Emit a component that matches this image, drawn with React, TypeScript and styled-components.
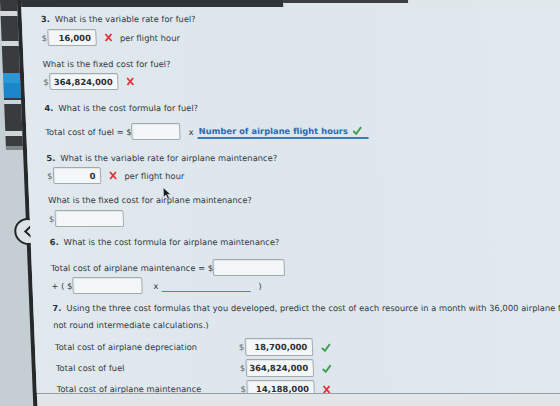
import React from 'react';
import styled, { createGlobalStyle } from 'styled-components';

const GlobalStyle = createGlobalStyle`
  html, body {
    margin: 0;
    padding: 0;
  }
  body {
    background: #c5ced3;
    font-family: "DejaVu Sans", Verdana, sans-serif;
    overflow: hidden;
  }
`;

// whole screen leans a little, like the monitor it was shot on
const Screen = styled.div`
  display: flex;
  width: 600px;
  height: 406px;
  transform: skewX(2.3deg);
  transform-origin: 0 0;
`;

const Rail = styled.nav`
  width: 17px;
  flex-shrink: 0;
  display: flex;
  flex-direction: column;
  background: #c5ced3;
`;

const RailBand = styled.div<{ $h: number; $c: string }>`
  height: ${p => p.$h}px;
  background: ${p => p.$c};
`;

const Divider = styled.div`
  width: 4px;
  flex-shrink: 0;
  position: relative;
  background: #26292b;
`;

const BackButton = styled.button`
  position: absolute;
  left: -12px;
  top: 218px;
  width: 28px;
  height: 27px;
  padding: 0;
  border: 2px solid #222527;
  border-radius: 50%;
  background: #dbe3e7;
  display: flex;
  align-items: center;
  justify-content: center;
`;

const Main = styled.main`
  flex: 1;
  min-width: 0;
  display: flex;
  flex-direction: column;
`;

const TopBar = styled.div`
  height: 7px;
  flex-shrink: 0;
  background:
    linear-gradient(#303437, #303437) 0 0 / 262px 7px no-repeat,
    linear-gradient(#3b3f42, #3b3f42) 262px 0 / 125px 3px no-repeat,
    #dfe7eb;
`;

const Panel = styled.section`
  flex: 1;
  position: relative;
  overflow: hidden;
  padding: 6px 0 0 19px;
  background: linear-gradient(90deg, #e1e9ee 0%, #dce6ec 45%, #e2eaf0 100%);
  color: #33393d;
  font-size: 8.4px;
`;

const Footer = styled.div`
  height: 13px;
  flex-shrink: 0;
  box-sizing: border-box;
  border-top: 1px solid #969ea3;
  background: #e2e6e8;
`;

const Line = styled.p<{ $mt?: number }>`
  margin: ${p => p.$mt ?? 0}px 0 0;
  line-height: 12px;
  white-space: nowrap;
`;

const Para = styled.p<{ $mt?: number }>`
  margin: ${p => p.$mt ?? 0}px 0 0;
  line-height: 17px;
  white-space: nowrap;
`;

const Num = styled.b`
  margin-right: 5px;
  color: #2c3236;
`;

const Row = styled.div<{ $mt?: number; $h?: number }>`
  display: flex;
  align-items: center;
  height: ${p => p.$h ?? 17}px;
  margin-top: ${p => p.$mt ?? 0}px;
  white-space: nowrap;
`;

const Dollar = styled.span`
  color: #60686d;
  margin-right: 1px;
`;

const Field = styled.span<{ $w: number; $h?: number }>`
  display: inline-flex;
  align-items: center;
  justify-content: flex-end;
  box-sizing: border-box;
  width: ${p => p.$w}px;
  height: ${p => p.$h ?? 17}px;
  padding-right: 5px;
  border: 1px solid #a2aaaf;
  border-radius: 2px;
  background: #f4f7f8;
  box-shadow: inset 1px 1px 1px rgba(0, 0, 0, 0.07);
  font-weight: bold;
  color: #2a3034;
`;

const Mark = styled.span<{ $ml?: number }>`
  display: inline-flex;
  margin-left: ${p => p.$ml ?? 0}px;
`;

const Text = styled.span<{ $ml?: number }>`
  margin-left: ${p => p.$ml ?? 0}px;
`;

const Choice = styled.span<{ $ml?: number; $w: number }>`
  display: inline-flex;
  align-items: center;
  box-sizing: border-box;
  width: ${p => p.$w}px;
  height: 15px;
  margin-left: ${p => p.$ml ?? 0}px;
  padding-left: 1px;
  border-bottom: 2px solid #3a7bc3;
  color: #2d6bb2;
  font-weight: bold;
`;

const Blank = styled.span<{ $ml?: number; $w: number }>`
  display: inline-block;
  width: ${p => p.$w}px;
  height: 12px;
  margin-left: ${p => p.$ml ?? 0}px;
  border-bottom: 1px solid #4a86c8;
`;

const ResultLabel = styled.span`
  width: 184px;
  padding-left: 1px;
`;

const Cursor = styled.svg`
  position: absolute;
  left: 134px;
  top: 180px;
`;

const WrongMark = ({ ml = 8 }: { ml?: number }) => (
  <Mark $ml={ml}>
    <svg width="8" height="9" viewBox="0 0 8 9">
      <path d="M1 1 L7 8 M7 1 L1 8" stroke="#e0363c" strokeWidth="1.9" fill="none" />
    </svg>
  </Mark>
);

const RightMark = ({ ml = 8 }: { ml?: number }) => (
  <Mark $ml={ml}>
    <svg width="10" height="9" viewBox="0 0 10 9">
      <path d="M1 5 L3.8 7.8 L9 1.2" stroke="#3f9d4b" strokeWidth="1.9" fill="none" />
    </svg>
  </Mark>
);

const railBands: [number, string][] = [
  [11, '#36393c'],
  [5, '#d4d8db'],
  [25, '#393c3f'],
  [5, '#d2d7da'],
  [27, '#393c3f'],
  [10, '#2a97d6'],
  [15, '#1b86c9'],
  [2, '#393c3f'],
  [4, '#cfd4d7'],
  [27, '#393c3f'],
  [5, '#d0d5d8'],
  [10, '#3a3d40'],
  [4, '#7f868b'],
];

const results = [
  { label: 'Total cost of airplane depreciation', value: '18,700,000', ok: true },
  { label: 'Total cost of fuel', value: '364,824,000', ok: true },
  { label: 'Total cost of airplane maintenance', value: '14,188,000', ok: false },
];

export default function App() {
  return (
    <>
      <GlobalStyle />
      <Screen>
        <Rail>
          {railBands.map(([h, c], i) => (
            <RailBand key={i} $h={h} $c={c} />
          ))}
        </Rail>
        <Divider>
          <BackButton aria-label="Previous">
            <svg width="10" height="13" viewBox="0 0 10 13">
              <path d="M8 1 L2 6.5 L8 12" stroke="#222527" strokeWidth="2" fill="none" />
            </svg>
          </BackButton>
        </Divider>
        <Main>
          <TopBar />
          <Panel>
            <Line>
              <Num>3.</Num>What is the variable rate for fuel?
            </Line>
            <Row $mt={4}>
              <Dollar>$</Dollar>
              <Field $w={49}>16,000</Field>
              <WrongMark />
              <Text $ml={7}>per flight hour</Text>
            </Row>

            <Line $mt={12}>What is the fixed cost for fuel?</Line>
            <Row $mt={3}>
              <Dollar>$</Dollar>
              <Field $w={69}>364,824,000</Field>
              <WrongMark />
            </Row>

            <Line $mt={12}>
              <Num>4.</Num>What is the cost formula for fuel?
            </Line>
            <Row $mt={9}>
              <span>Total cost of fuel = $</span>
              <Field $w={49} />
              <Text $ml={8}>x</Text>
              <Choice $ml={4} $w={171}>
                Number of airplane flight hours
                <RightMark ml={4} />
              </Choice>
            </Row>

            <Line $mt={12}>
              <Num>5.</Num>What is the variable rate for airplane maintenance?
            </Line>
            <Row $mt={3}>
              <Dollar>$</Dollar>
              <Field $w={48}>0</Field>
              <WrongMark />
              <Text $ml={7}>per flight hour</Text>
            </Row>

            <Line $mt={10}>What is the fixed cost for airplane maintenance?</Line>
            <Row $mt={4}>
              <Dollar>$</Dollar>
              <Field $w={69} />
            </Row>

            <Line $mt={9}>
              <Num>6.</Num>What is the cost formula for airplane maintenance?
            </Line>
            <Row $mt={11}>
              <span>Total cost of airplane maintenance = $</span>
              <Field $w={72} />
            </Row>
            <Row $mt={1}>
              <span>+ ( $</span>
              <Field $w={70} />
              <Text $ml={11}>x</Text>
              <Blank $ml={3} $w={89} />
              <Text $ml={8}>)</Text>
            </Row>

            <Para $mt={6}>
              <Num>7.</Num>Using the three cost formulas that you developed, predict the cost of each
              resource in a month with 36,000 airplane flight hours. (Do
              <br />
              not round intermediate calculations.)
            </Para>
            {results.map((r, i) => (
              <Row key={r.label} $mt={i === 0 ? 4 : 3} $h={18}>
                <ResultLabel>{r.label}</ResultLabel>
                <Dollar>$</Dollar>
                <Field $w={68} $h={18}>{r.value}</Field>
                {r.ok ? <RightMark /> : <WrongMark />}
              </Row>
            ))}

            <Cursor width="9" height="13" viewBox="0 0 9 13">
              <path
                d="M0.6 0.6 L0.6 10.4 L3 8 L4.9 12.1 L6.6 11.3 L4.8 7.4 L8 7.4 Z"
                fill="#1c1e20"
                stroke="#e9eef0"
                strokeWidth="0.6"
              />
            </Cursor>
          </Panel>
          <Footer />
        </Main>
      </Screen>
    </>
  );
}
